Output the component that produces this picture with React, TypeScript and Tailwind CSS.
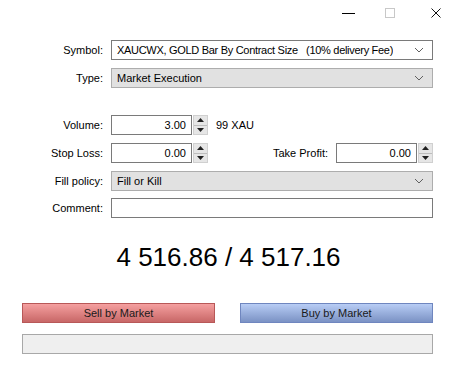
import React from 'react';

const font = { fontFamily: '"Liberation Sans", Arial, sans-serif' };

const Chevron = () => (
    <svg width="10" height="6" viewBox="0 0 10 6" className="shrink-0">
        <path d="M1 1 L5 5 L9 1" fill="none" stroke="#606060" strokeWidth="1" />
    </svg>
);

const Select = ({ value, gray, tight }: { value: string; gray?: boolean; tight?: boolean }) => (
    <div
        className={`h-[20px] flex items-center justify-between pl-[5px] pr-[8px] border overflow-hidden ${
            gray ? 'bg-[#e1e1e1] border-[#adadad]' : 'bg-white border-[#7a7a7a]'
        }`}
    >
        <span className={`whitespace-pre truncate ${tight ? 'tracking-[-0.3px]' : ''}`}>{value}</span>
        <Chevron />
    </div>
);

const Spinner = () => (
    <div className="w-[15px] h-[20px] shrink-0 flex flex-col border border-[#d0d0d0] bg-[#e6e6e6]">
        <div className="flex-1 flex items-center justify-center border-b border-[#bdbdbd]">
            <svg width="7" height="4" viewBox="0 0 7 4">
                <path d="M0 4 L3.5 0 L7 4 Z" fill="#202020" />
            </svg>
        </div>
        <div className="flex-1 flex items-center justify-center">
            <svg width="7" height="4" viewBox="0 0 7 4">
                <path d="M0 0 L3.5 4 L7 0 Z" fill="#202020" />
            </svg>
        </div>
    </div>
);

const NumInput = ({ value }: { value: string }) => (
    <div className="w-[97px] h-[20px] shrink-0 flex items-center gap-[1px]">
        <div className="flex-1 h-full border border-[#7a7a7a] bg-white flex items-center justify-end pr-[5px]">
            {value}
        </div>
        <Spinner />
    </div>
);

const Label = ({ children }: { children: React.ReactNode }) => (
    <div className="w-[104px] shrink-0 text-right pr-[1px]">{children}</div>
);

export default function App() {
    return (
        <div className="w-[457px] h-[386px] bg-white text-[11px] text-black" style={font}>
            {/* caption buttons */}
            <div className="h-[40px] flex items-start justify-end pr-[16px] pt-[8px]">
                <div className="w-[13px] h-[1px] bg-black mt-[5px]" />
                <div className="w-[10px] h-[10px] border border-[#c8c8c8] ml-[30px]" />
                <svg width="10" height="10" viewBox="0 0 10 10" className="ml-[36px]">
                    <path d="M0.5 0.5 L9.5 9.5 M9.5 0.5 L0.5 9.5" stroke="#111" strokeWidth="1" />
                </svg>
            </div>

            <div className="flex flex-col pr-[24px]">
                <div className="flex items-center gap-[7px]">
                    <Label>Symbol:</Label>
                    <div className="flex-1 min-w-0">
                        <Select value="XAUCWX, GOLD Bar By Contract Size   (10% delivery Fee)" tight />
                    </div>
                </div>
                <div className="flex items-center gap-[7px] mt-[8px]">
                    <Label>Type:</Label>
                    <div className="flex-1 min-w-0">
                        <Select value="Market Execution" gray />
                    </div>
                </div>

                <div className="flex items-center gap-[7px] mt-[27px]">
                    <Label>Volume:</Label>
                    <NumInput value="3.00" />
                    <span className="ml-[1px]">99 XAU</span>
                </div>
                <div className="flex items-center gap-[7px] mt-[8px]">
                    <Label>Stop Loss:</Label>
                    <NumInput value="0.00" />
                    <div className="flex-1 text-right pr-[1px]">Take Profit:</div>
                    <NumInput value="0.00" />
                </div>
                <div className="flex items-center gap-[7px] mt-[8px]">
                    <Label>Fill policy:</Label>
                    <div className="flex-1 min-w-0">
                        <Select value="Fill or Kill" gray />
                    </div>
                </div>
                <div className="flex items-center gap-[7px] mt-[7px]">
                    <Label>Comment:</Label>
                    <div className="flex-1 h-[20px] border border-[#7a7a7a] bg-white" />
                </div>
            </div>

            <div className="mt-[22px] h-[34px] flex items-center justify-center text-[26px] leading-none">
                4 516.86 / 4 517.16
            </div>

            <div className="pl-[22px] pr-[24px] mt-[29px]">
                <div className="flex justify-between">
                    <div className="w-[193px] h-[20px] border border-[#b85858] bg-gradient-to-b from-[#f5a0a0] to-[#c86767] flex items-center justify-center text-[#1a1a1a]">
                        Sell by Market
                    </div>
                    <div className="w-[193px] h-[20px] border border-[#6f86bf] bg-gradient-to-b from-[#b8cdf5] to-[#7b92c4] flex items-center justify-center text-[#1a1a1a]">
                        Buy by Market
                    </div>
                </div>
                <div className="mt-[11px] h-[20px] border border-[#a8a8a8] bg-[#efefef]" />
            </div>
        </div>
    );
}
